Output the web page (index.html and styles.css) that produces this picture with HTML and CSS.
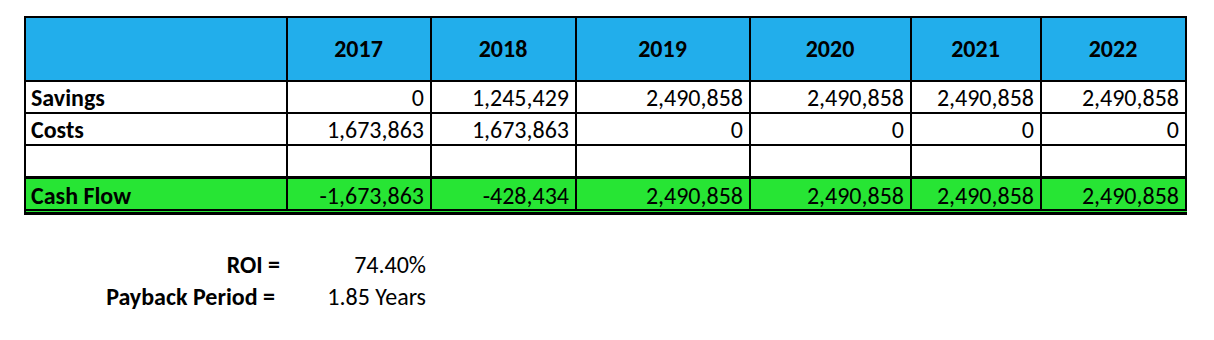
FILE: index.html
```html
<!DOCTYPE html>
<html lang="en">
<head>
<meta charset="utf-8">
<title>ROI Cash Flow</title>
<link rel="stylesheet" href="styles.css">
</head>
<body>
<div class="page">
  <table class="cf">
    <thead>
      <tr class="head">
        <th class="c-label"></th>
        <th class="c-17">2017</th>
        <th class="c-18">2018</th>
        <th class="c-19">2019</th>
        <th class="c-20">2020</th>
        <th class="c-21">2021</th>
        <th class="c-22">2022</th>
      </tr>
    </thead>
    <tbody>
      <tr class="row">
        <th class="lbl">Savings</th>
        <td>0</td>
        <td>1,245,429</td>
        <td>2,490,858</td>
        <td>2,490,858</td>
        <td>2,490,858</td>
        <td>2,490,858</td>
      </tr>
      <tr class="row">
        <th class="lbl">Costs</th>
        <td>1,673,863</td>
        <td>1,673,863</td>
        <td>0</td>
        <td>0</td>
        <td>0</td>
        <td>0</td>
      </tr>
      <tr class="row blank">
        <th class="lbl"></th>
        <td></td><td></td><td></td><td></td><td></td><td></td>
      </tr>
      <tr class="row cash">
        <th class="lbl">Cash Flow</th>
        <td>-1,673,863</td>
        <td>-428,434</td>
        <td>2,490,858</td>
        <td>2,490,858</td>
        <td>2,490,858</td>
        <td>2,490,858</td>
      </tr>
    </tbody>
  </table>

  <dl class="summary">
    <dt class="s-label">ROI =</dt>
    <dd class="s-value">74.40%</dd>
    <dt class="s-label s-payback">Payback Period =</dt>
    <dd class="s-value">1.85 Years</dd>
  </dl>
</div>
</body>
</html>
```

FILE: styles.css
```css
html, body {
  margin: 0;
  padding: 0;
  background: #ffffff;
}

body {
  font-family: Carlito, Lato, "Liberation Sans", sans-serif;
  font-size: 24px;
  color: #000000;
}

.page {
  padding: 16px 0 0 24px;
}

.cf {
  border-collapse: separate;
  border-spacing: 0;
  table-layout: fixed;
  border-left: 2px solid #000;
  border-top: 2px solid #000;
  border-bottom: 3px solid #000;
  padding: 0 0 1px 0;
  background: #27e534;
}

.cf th,
.cf td {
  box-sizing: border-box;
  border-right: 2px solid #000;
  border-bottom: 2px solid #000;
  padding: 0 6px 1px 5px;
  line-height: 26px;
  white-space: nowrap;
  overflow: hidden;
}

.head th {
  height: 64px;
  padding-bottom: 0;
  background: #22aeeb;
  font-weight: 700;
  text-align: center;
  vertical-align: middle;
}

.c-label { width: 262px; }
.c-17 { width: 144px; }
.c-18 { width: 145px; }
.c-19 { width: 174px; }
.c-20 { width: 161px; }
.c-21 { width: 130px; }
.c-22 { width: 145px; }

.row th,
.row td {
  height: 32px;
  background: #ffffff;
  vertical-align: bottom;
}

.row .lbl {
  text-align: left;
  font-weight: 700;
}

.row td {
  text-align: right;
}

.row.blank th,
.row.blank td {
  height: 33px;
  border-bottom-width: 3px;
}

.row.cash th,
.row.cash td {
  background: #27e534;
  padding-bottom: 0;
}

.summary {
  display: grid;
  grid-template-columns: 256px 146px;
  grid-auto-rows: 32px;
  margin: 34px 0 0 0;
  line-height: 32px;
}

.s-label {
  font-weight: 700;
  text-align: right;
  margin: 0;
}

.s-payback {
  padding-right: 5px;
}

.s-value {
  text-align: right;
  margin: 0;
}
```
